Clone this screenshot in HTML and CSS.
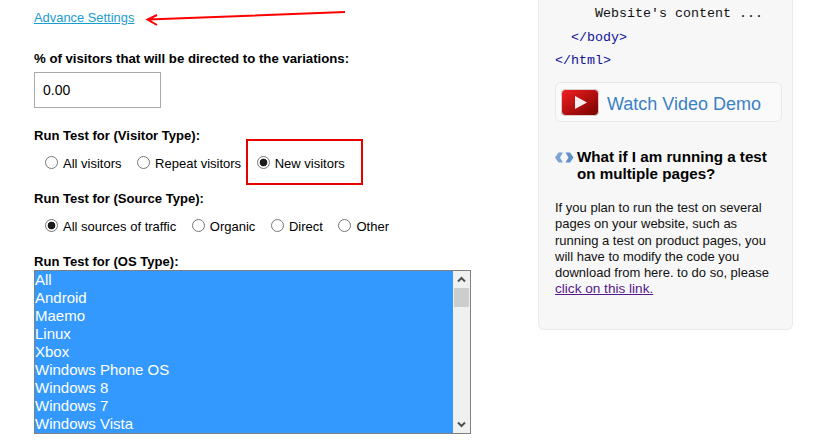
FILE: index.html
```html
<!DOCTYPE html>
<html lang="en">
<head>
<meta charset="utf-8">
<title>Advance Settings</title>
<link rel="stylesheet" href="styles.css">
</head>
<body>
<div class="page">
  <main class="form">
    <a class="advance" href="#">Advance Settings</a>
    <div class="label percent-label">% of visitors that will be directed to the variations:</div>
    <input class="percent" type="text" value="0.00">
    <div class="label visitor-label">Run Test for (Visitor Type):</div>
    <div class="radios visitor">
      <label class="radio"><input type="radio" name="v"><span>All visitors</span></label>
      <label class="radio"><input type="radio" name="v"><span>Repeat visitors</span></label>
      <label class="radio"><input type="radio" name="v" checked><span>New visitors</span></label>
    </div>
    <div class="label source-label">Run Test for (Source Type):</div>
    <div class="radios source">
      <label class="radio"><input type="radio" name="s" checked><span>All sources of traffic</span></label>
      <label class="radio"><input type="radio" name="s"><span>Organic</span></label>
      <label class="radio"><input type="radio" name="s"><span>Direct</span></label>
      <label class="radio"><input type="radio" name="s"><span>Other</span></label>
    </div>
    <div class="label os-label">Run Test for (OS Type):</div>
    <div class="listbox">
      <div class="options">
        <div>All</div><div>Android</div><div>Maemo</div><div>Linux</div><div>Xbox</div>
        <div>Windows Phone OS</div><div>Windows 8</div><div>Windows 7</div><div>Windows Vista</div>
      </div>
      <div class="scrollbar">
        <svg class="chev" width="17" height="17" viewBox="0 0 17 17"><path d="M5 10.500 8.500 7l3.500 3.500" fill="none" stroke="#505050" stroke-width="2"/></svg>
        <div class="thumb"></div>
        <div class="track"></div>
        <svg class="chev" width="17" height="17" viewBox="0 0 17 17"><path d="M5 6.500 8.500 10 12 6.500" fill="none" stroke="#505050" stroke-width="2"/></svg>
      </div>
    </div>
  </main>
  <aside class="panel">
    <div class="code indent2">Website's content ...</div>
    <div class="code indent1 tag">&lt;/body&gt;</div>
    <div class="code tag">&lt;/html&gt;</div>
    <a class="demo" href="#">
      <svg class="play" width="38" height="27" viewBox="0 0 38 27">
        <defs><linearGradient id="red" x1="0" y1="0" x2="1" y2="1"><stop offset="0" stop-color="#f42020"/><stop offset="1" stop-color="#760000"/></linearGradient></defs>
        <rect x="0.500" y="0.500" width="37" height="26" rx="4" fill="url(#red)" stroke="#d9cfcf"/>
        <path d="M14 7 26 13.500 14 20z" fill="#f6eeee"/>
      </svg>
      <span>Watch Video Demo</span>
    </a>
    <div class="question">
      <svg class="arrows" width="19" height="11" viewBox="0 0 19 11"><path d="M8 0.500 3.500 0.500 0 5.500 3.500 10.500 8 10.500 5 5.500z" fill="#7fa3cf"/><path d="M10.500 0.500 15 0.500 18.500 5.500 15 10.500 10.500 10.500 13.500 5.500z" fill="#5f8fc8"/></svg>
      <h3>What if I am running a test on multiple pages?</h3>
    </div>
    <p class="body-text">If you plan to run the test on several pages on your website, such as running a test on product pages, you will have to modify the code you download from here. to do so, please <a href="#">click on this link.</a></p>
  </aside>
</div>
<svg class="arrow" width="220" height="22" viewBox="0 0 220 22"><path d="M201 3 4 10.500M13 6 3.500 10.500 13 16" fill="none" stroke="#f00" stroke-width="2"/></svg>
<div class="highlight"></div>
</body>
</html>
```
FILE: styles.css
```css
* { box-sizing: border-box; }
html, body { margin: 0; height: 445px; overflow: hidden; background: #fff; }
body { position: relative; font-family: "Liberation Sans", Arial, sans-serif; color: #000; font-size: 14px; }
.page { display: flex; align-items: flex-start; }
.form { width: 538px; padding: 10px 0 0 34px; display: flex; flex-direction: column; align-items: flex-start; }
.advance { color: #1a9ccf; font-size: 12.900px; line-height: 16px; }
.label { font-weight: bold; font-size: 13.050px; line-height: 16px; }
.percent-label { margin-top: 25px; font-size: 13.200px; }
.percent { width: 127px; height: 36px; margin-top: 5px; border: 1px solid #a9a9a9; padding: 0 8px; font: 14px "Liberation Sans", Arial, sans-serif; color: #000; outline: none; }
.visitor-label { margin-top: 20px; }
.radios { display: flex; align-items: center; height: 18px; }
.visitor { margin-top: 10px; margin-left: 11px; gap: 15.600px; }
.radio { display: flex; align-items: center; gap: 5px; font-size: 13px; line-height: 16px; }
.radio span { position: relative; top: 1px; }
.radio input { appearance: none; width: 13px; height: 13px; margin: 0; border: 1px solid #767676; border-radius: 50%; background: #fff; position: relative; top: -1px; flex: none; }
.radio input:checked { background: radial-gradient(circle, #1c1c1c 0 3.500px, #fff 4.200px); }
.source-label { margin-top: 19px; }
.source { margin-top: 10px; margin-left: 11px; gap: 15.600px; }
.os-label { margin-top: 19px; }
.listbox { display: flex; width: 437px; height: 164px; margin-top: 0; border: 1px solid #808080; background: #39f; overflow: hidden; }
.options { flex: 1; color: #fff; font-size: 15px; line-height: 18px; }
.options div { height: 18px; white-space: nowrap; }
.scrollbar { width: 17px; background: #f0f0f0; display: flex; flex-direction: column; flex: none; }
.chev { display: block; flex: none; }
.thumb { height: 19px; margin: 0 1px; background: #cdcdcd; flex: none; }
.track { flex: 1; }
.panel { width: 255px; height: 330px; padding: 0 10px 0 16px; background: #f7f7f7; border: 1px solid #eaeaea; border-top: 0; border-radius: 0 0 6px 6px; }
.code { font: 13.330px/23px "Liberation Mono", "Courier New", monospace; height: 23px; white-space: pre; color: #111; }
.code:first-child { margin-top: 2px; }
.tag { color: #12129a; position: relative; top: 1px; }
.indent1 { padding-left: 16px; }
.indent2 { padding-left: 40px; }
.demo { display: flex; align-items: center; gap: 8px; width: 227px; height: 40px; margin-top: 11px; padding-left: 5px; border: 1px solid #e9e9e9; border-radius: 6px; background: #fafafa; color: #3b80c4; font-size: 18px; text-decoration: none; }
.demo span { padding-top: 4px; }
.question { display: flex; gap: 3px; margin-top: 26px; }
.arrows { flex: none; margin-top: 4px; }
.question h3 { margin: 0; font-size: 15.200px; line-height: 17px; font-weight: bold; }
.body-text { margin: 18px 0 0; font-size: 13px; line-height: 16.300px; color: #111; }
.body-text a { color: #551a8b; font-size: 13.600px; }
.arrow { position: absolute; left: 144px; top: 9px; }
.highlight { position: absolute; left: 246px; top: 139px; width: 117px; height: 46px; border: 2px solid #e60000; }
```
